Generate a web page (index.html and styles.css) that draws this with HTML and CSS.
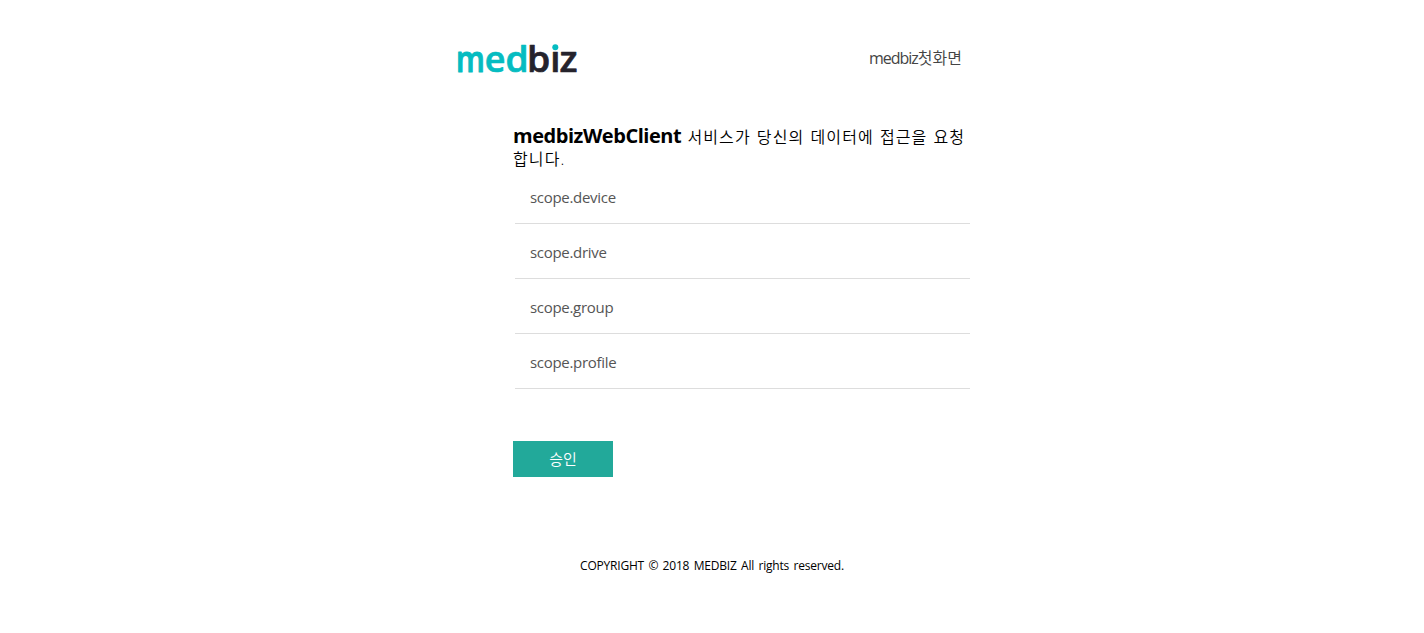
FILE: index.html
```html
<!DOCTYPE html>
<html lang="ko">
<head>
<meta charset="utf-8">
<title>medbiz</title>
<link rel="stylesheet" href="styles.css">
</head>
<body>
<div class="page">
  <header class="header">
    <a class="logo" href="#">
      <svg width="124" height="36" viewBox="0 0 124 36" role="img" aria-label="medbiz">
        <text class="logo-med" y="31.2"><tspan class="logo-m" x="-0.1" textLength="28.8" lengthAdjust="spacingAndGlyphs">m</tspan><tspan x="28.7" textLength="20.7" lengthAdjust="spacingAndGlyphs">e</tspan><tspan x="49.4" textLength="23.2" lengthAdjust="spacingAndGlyphs">d</tspan></text>
        <text class="logo-biz" y="31.2"><tspan x="71" textLength="23.2" lengthAdjust="spacingAndGlyphs">b</tspan><tspan x="94.2" textLength="10.2" lengthAdjust="spacingAndGlyphs">ı</tspan><tspan x="103.4" textLength="18" lengthAdjust="spacingAndGlyphs">z</tspan></text>
        <circle class="logo-dot" cx="99.3" cy="6.2" r="3"/>
      </svg>
    </a>
    <a class="home" href="#"><span class="home-latin">medbiz</span>첫화면</a>
  </header>
  <main class="content">
    <p class="request"><strong class="client">medbizWebClient</strong> 서비스가 당신의 데이터에 접근을 요청합니다.</p>
    <ul class="scopes">
      <li class="scope">scope.device</li>
      <li class="scope">scope.drive</li>
      <li class="scope">scope.group</li>
      <li class="scope">scope.profile</li>
    </ul>
    <button class="approve" type="button">승인</button>
  </main>
  <footer class="footer">COPYRIGHT © 2018 MEDBIZ All rights reserved.</footer>
</div>
</body>
</html>
```
FILE: styles.css
```css
* { box-sizing: border-box; }
body {
  margin: 0;
  background: #fff;
  color: #000;
  font-family: "Open Sans", "Noto Sans CJK KR", sans-serif;
}
.page { width: 512px; margin: 0 auto; padding-top: 41px; }
.header {
  display: flex;
  justify-content: space-between;
  height: 36px;
  padding-right: 6px;
}
.logo { display: block; height: 36px; }
.logo svg { display: block; overflow: visible; }
.logo text {
  font-family: "Open Sans", sans-serif;
  font-weight: 600;
  font-size: 36px;
  stroke-width: 0.7px;
  stroke-linejoin: round;
}
.logo-med { fill: #05bcc1; stroke: #05bcc1; }
.logo-m { stroke-width: 1.1px; }
.logo-dot { fill: #05bcc1; }
.logo-biz { fill: #25232c; stroke: #25232c; }
.home {
  color: #444;
  font-size: 16px;
  font-weight: 350;
  line-height: 34px;
  letter-spacing: 0;
  text-decoration: none;
  white-space: nowrap;
}
.home-latin { font-weight: 400; letter-spacing: -1px; }
.content { width: 457px; margin: 48px 0 0 57px; }
.request {
  height: 44px;
  margin: 0;
  font-size: 16px;
  font-weight: 350;
  line-height: 22px;
  letter-spacing: 1.1px;
  word-spacing: 0.9px;
  word-break: break-all;
}
.client { font-size: 20px; font-weight: 700; letter-spacing: -0.45px; }
.scopes { list-style: none; margin: 0 0 0 2px; padding: 0; width: 455px; }
.scope {
  height: 55px;
  padding: 15px 15px 0;
  border-bottom: 1px solid #ddd;
  color: #555;
  font-size: 15px;
  line-height: 26px;
  letter-spacing: -0.3px;
}
.approve {
  display: block;
  width: 100px;
  height: 36px;
  margin-top: 52px;
  padding: 0;
  border: 0;
  background: #22a99a;
  color: #fff;
  font: 350 15px/36px "Noto Sans CJK KR", sans-serif;
}
.footer {
  margin-top: 80px;
  font-size: 12px;
  line-height: 18px;
  letter-spacing: -0.2px;
  word-spacing: 1.5px;
  text-align: center;
  white-space: nowrap;
}
```
